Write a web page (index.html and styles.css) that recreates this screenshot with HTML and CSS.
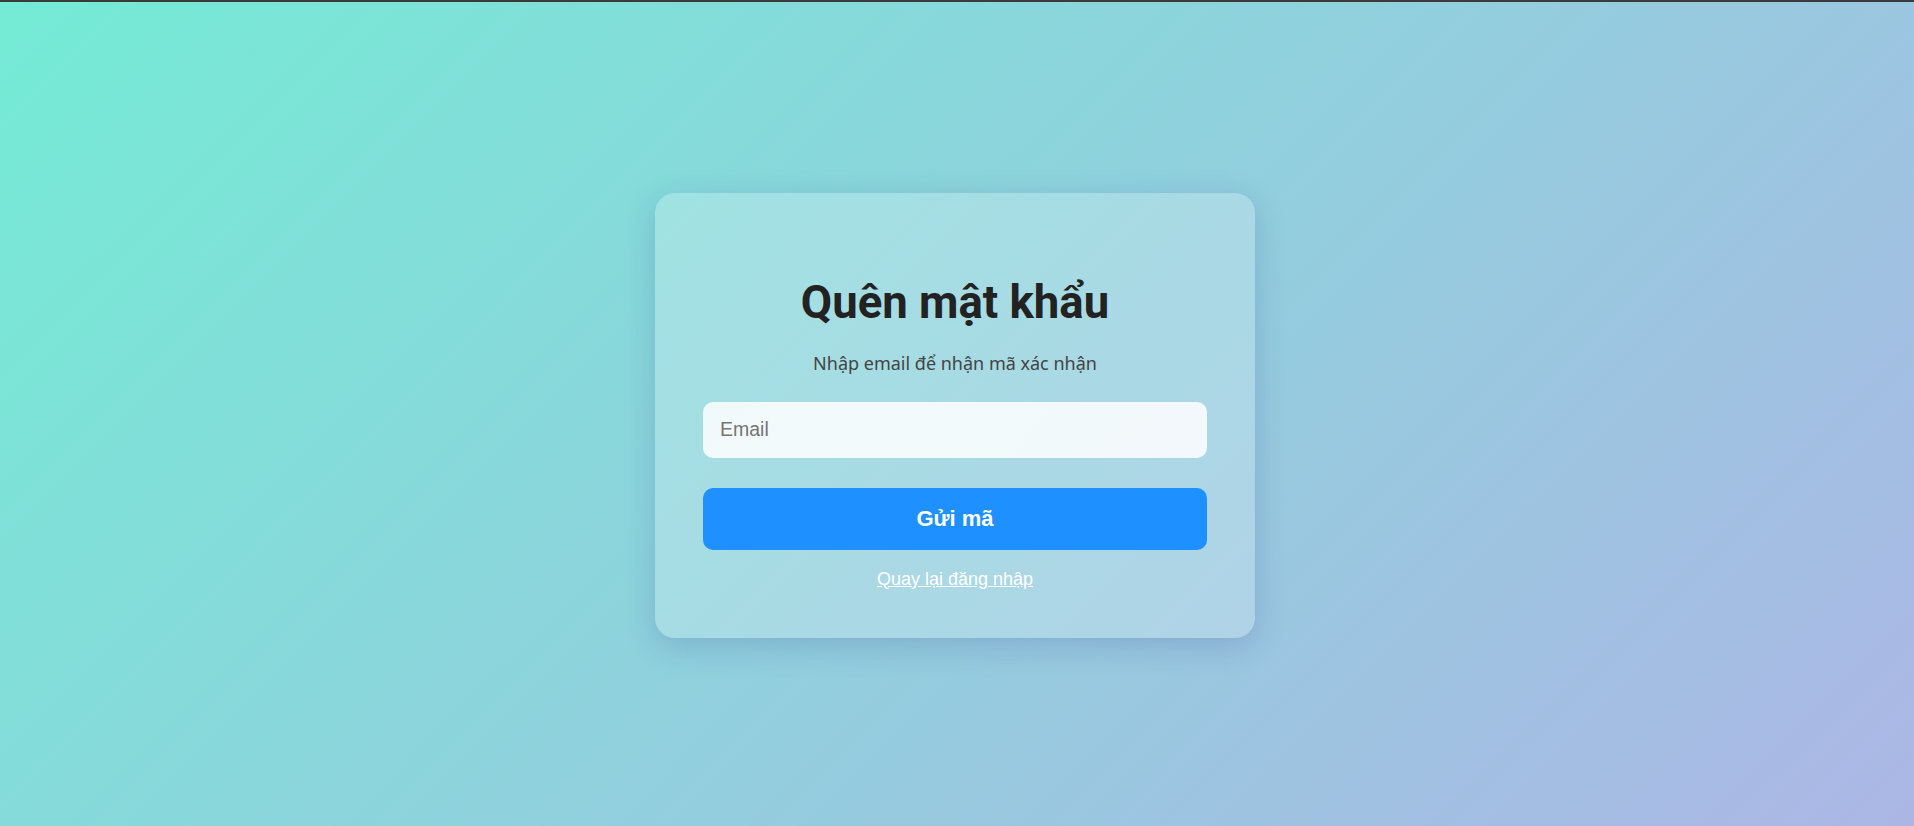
FILE: index.html
```html
<!DOCTYPE html>
<html lang="vi">
<head>
<meta charset="utf-8">
<title>Quên mật khẩu</title>
<link rel="stylesheet" href="styles.css">
</head>
<body>
<div class="topline"></div>
<main class="page">
  <form class="card" onsubmit="return false;">
    <h2 class="title">Quên mật khẩu</h2>
    <p class="subtitle">Nhập email để nhận mã xác nhận</p>
    <input class="field" type="email" placeholder="Email">
    <button class="btn" type="submit">Gửi mã</button>
    <a class="back" href="#">Quay lại đăng nhập</a>
  </form>
</main>
</body>
</html>
```

FILE: styles.css
```css
html, body {
  margin: 0;
  padding: 0;
  height: 100%;
}
body {
  display: flex;
  flex-direction: column;
  background: #3b3b3b;
}
.topline {
  height: 2px;
  background: #3b3b3b;
  flex: 0 0 auto;
}
.page {
  flex: 1;
  display: flex;
  align-items: center;
  justify-content: center;
  background: linear-gradient(135deg, #74ebd5 0%, #acb6e5 100%);
  padding-right: 4px;
  padding-top: 2px;
}
.card {
  width: 600px;
  box-sizing: border-box;
  padding: 84px 48px 48px;
  background: rgba(255, 255, 255, 0.22);
  border-radius: 20px;
  box-shadow: 0 8px 32px rgba(31, 38, 135, 0.18);
  display: flex;
  flex-direction: column;
  align-items: stretch;
  text-align: center;
}
.title {
  margin: 0;
  font-family: Roboto, "Noto Sans", sans-serif;
  font-weight: 700;
  font-size: 45.5px;
  line-height: 52px;
  color: #222;
}
.subtitle {
  margin: 22px 0 0;
  font-family: "Noto Sans", "Open Sans", sans-serif;
  font-size: 18px;
  line-height: 24px;
  color: #444;
}
.field {
  margin-top: 27px;
  height: 56px;
  box-sizing: border-box;
  border: none;
  outline: none;
  border-radius: 10px;
  padding: 0 17px;
  background: rgba(255, 255, 255, 0.85);
  font-family: "Liberation Sans", Arial, sans-serif;
  font-size: 19.5px;
  color: #222;
}
.field::placeholder {
  color: #757575;
}
.btn {
  margin-top: 30px;
  height: 62px;
  border: none;
  border-radius: 10px;
  background: #1e90ff;
  color: #fff;
  font-family: "Liberation Sans", Arial, sans-serif;
  font-weight: 700;
  font-size: 22px;
  cursor: pointer;
}
.back {
  margin-top: 18px;
  align-self: center;
  font-family: "Liberation Sans", Arial, sans-serif;
  font-size: 18px;
  line-height: 22px;
  color: #fff;
  text-decoration: underline;
}
```
